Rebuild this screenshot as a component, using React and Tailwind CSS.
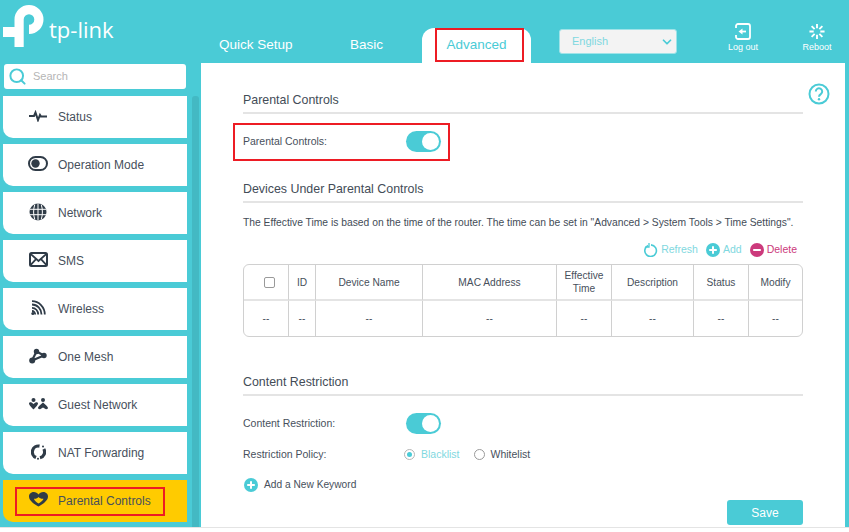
import { ChevronDown, Search } from 'lucide-react'

const ink = '#2f3b47'

function StatusIcon() {
  return (
    <svg width="18" height="12" viewBox="0 0 18 12" fill="none" stroke={ink} strokeWidth="2">
      <path d="M0 6h5l1.500-3.500L9 10l2-5 1 1.500h6" />
    </svg>
  )
}

function ModeIcon() {
  return (
    <svg width="20" height="15" viewBox="0 0 20 15" fill="none">
      <rect x="1" y="1" width="18" height="13" rx="6.500" stroke={ink} strokeWidth="2" />
      <circle cx="7.500" cy="7.500" r="4.200" fill={ink} />
    </svg>
  )
}

function GlobeIcon() {
  return (
    <svg width="18" height="18" viewBox="0 0 18 18">
      <circle cx="9" cy="9" r="8.500" fill={ink} />
      <path d="M1 6.300h16M1 11.700h16M9 .5v17M5.800 1.500c-1.600 4.500-1.600 10.500 0 15M12.200 1.500c1.600 4.500 1.600 10.500 0 15" stroke="#fff" strokeWidth="1" fill="none" />
    </svg>
  )
}

function MailIcon() {
  return (
    <svg width="19" height="15" viewBox="0 0 19 15" fill="none" stroke={ink}>
      <rect x="1" y="1" width="17" height="13" rx="1.500" strokeWidth="2" />
      <path d="M1.500 1.800 9.500 9l8-7.200M1.500 13.200l5.500-6M17.500 13.200l-5.500-6" strokeWidth="1.800" />
    </svg>
  )
}

function WirelessIcon() {
  return (
    <svg width="15" height="15" viewBox="0 0 15 15" fill="none" stroke={ink} strokeWidth="1.800">
      <path d="M1 1.200C8 1.200 13.800 7 13.800 14.500M1 4.500c5.200 0 9.500 4.500 9.500 10M1 7.800c3.500 0 6.200 3 6.200 6.700M1 11c1.800 0 3.200 1.600 3.200 3.500" />
      <circle cx="1.800" cy="13.400" r="1.500" fill={ink} stroke="none" />
    </svg>
  )
}

function MeshIcon() {
  return (
    <svg width="18" height="16" viewBox="0 0 18 16" fill={ink} stroke={ink}>
      <path d="M7.500 3.500 3 12.500M7.500 3.500l7.500 4M3 12.500 15 7.500" strokeWidth="2.200" fill="none" />
      <circle cx="7.500" cy="3.500" r="2.700" stroke="none" />
      <circle cx="3.200" cy="12.500" r="3" stroke="none" />
      <circle cx="15" cy="7.500" r="2.700" stroke="none" />
    </svg>
  )
}

function GuestIcon() {
  return (
    <svg width="19" height="12" viewBox="0 0 19 12" fill={ink}>
      <circle cx="4.500" cy="2" r="2" />
      <path d="M0 5.500c0-1 1.500-1.500 2.500-1 .8.400 1.400.9 2 1.500.6-.6 1.200-1.100 2-1.500 1-.5 2.500 0 2.500 1 0 1.500-3 4.500-4.500 6C3 10 0 7 0 5.500Z" />
      <circle cx="14" cy="2" r="2" />
      <path d="M14 4.500c1.500 1 5 4.500 5 5.500s-1.500 1.500-2.500 1L14 9.500 11.500 11c-1 .5-2.500 0-2.500-1s3.500-4.500 5-5.500Z" />
    </svg>
  )
}

function NatIcon() {
  return (
    <svg width="15" height="16" viewBox="0 0 15 16" fill="none" stroke={ink} strokeWidth="3.200">
      <path d="M8.500 2.100A6 6 0 0 0 5 13.500" />
      <path d="M12.800 5A6 6 0 0 1 9 13.800" />
      <circle cx="12" cy="2.500" r="1" fill={ink} stroke="none" />
      <circle cx="7" cy="14.800" r="1" fill={ink} stroke="none" />
    </svg>
  )
}

function HeartIcon() {
  return (
    <svg width="19" height="15" viewBox="0 0 19 15">
      <path d="M9.500 14.500C6 12.500 0 9 0 4.500 0 1.500 2.500 0 4.700 0 6.800 0 8.500 1 9.500 2.500 10.500 1 12.200 0 14.300 0 16.500 0 19 1.500 19 4.500c0 4.500-6 8-9.500 10Z" fill={ink} />
      <path d="M9.500 11.500C7.500 10.200 5 8.500 5 6.800c2 .2 3.500-.5 4.500-1.800 1 1.300 3 2 5 1.800-.2 1.800-3 3.500-5 4.700Z" fill="#ffcb00" />
    </svg>
  )
}

const menu = [
  { label: 'Status', icon: <StatusIcon /> },
  { label: 'Operation Mode', icon: <ModeIcon /> },
  { label: 'Network', icon: <GlobeIcon /> },
  { label: 'SMS', icon: <MailIcon /> },
  { label: 'Wireless', icon: <WirelessIcon /> },
  { label: 'One Mesh', icon: <MeshIcon /> },
  { label: 'Guest Network', icon: <GuestIcon /> },
  { label: 'NAT Forwarding', icon: <NatIcon /> },
  { label: 'Parental Controls', icon: <HeartIcon />, active: true },
]

const columns = ['', 'ID', 'Device Name', 'MAC Address', 'Effective Time', 'Description', 'Status', 'Modify']

function RedBox({ className }) {
  return <div className={`pointer-events-none absolute border-2 border-[#ed1c24] ${className}`} />
}

function Logo() {
  return (
    <div className="flex h-[63px] w-[219px] shrink-0">
      <svg width="46" height="48" viewBox="0 0 46 48" className="mt-[5px] ml-[3px]" fill="#fff">
        <path d="M11.500 42V14.500A14.500 14.500 0 1 1 26 29V19.800A5.300 5.300 0 1 0 20.700 14.500V42Z" />
        <rect x="0" y="22" width="20" height="10" />
      </svg>
      <span className="mt-[12px] font-['Open_Sans'] text-[22px] leading-[34px] text-white">tp-link</span>
    </div>
  )
}

function Header() {
  return (
    <header className="flex h-[63px] items-end bg-[#4acbd6] text-white">
      <Logo />
      <div className="flex h-[35px] items-center text-[13.500px]">
        <span className="w-[131px]">Quick Setup</span>
        <span className="w-[72px]">Basic</span>
        <div className="flex h-[35px] w-[109px] items-center justify-center rounded-t-[12px] bg-white text-[#4acbd6]">
          Advanced
        </div>
      </div>
      <div className="mb-[9px] ml-[28px] flex h-[25px] w-[118px] items-center justify-between rounded-[3px] border border-[#9fe3e8] bg-[#f3f3f3] pr-[2px] pl-[12px] text-[11px] text-[#7fd8e0]">
        English
        <ChevronDown size={14} strokeWidth={3} className="text-[#4acbd6]" />
      </div>
      <div className="mb-[10px] ml-[40px] flex w-[52px] flex-col items-center text-[9px] leading-[11px]">
        <svg width="16" height="17" viewBox="0 0 16 17" fill="none" stroke="#fff" strokeWidth="1.800" className="mb-[2px]">
          <path d="M1 5V3a2 2 0 0 1 2-2h10a2 2 0 0 1 2 2v11a2 2 0 0 1-2 2H3a2 2 0 0 1-2-2v-2" />
          <path d="M7 8.500h4" />
          <path d="M7.500 5.500v6l-4-3Z" fill="#fff" stroke="none" />
        </svg>
        Log out
      </div>
      <div className="mb-[10px] ml-[22px] flex w-[52px] flex-col items-center text-[9px] leading-[11px]">
        <svg width="18" height="17" viewBox="0 0 18 18" fill="none" stroke="#fff" strokeWidth="2" className="mb-[2px]">
          <path d="M9 1v4.500M9 12.500V17M1 9h4.500M12.500 9H17M3.300 3.300l3.200 3.200M11.500 11.500l3.200 3.200M14.700 3.300l-3.200 3.200M6.500 11.500l-3.200 3.200" />
        </svg>
        Reboot
      </div>
    </header>
  )
}

function Sidebar() {
  return (
    <aside className="flex w-[201px] shrink-0 flex-col pl-[3px]">
      <div className="mt-[1px] mb-[7px] ml-[1px] flex h-[25px] w-[182px] items-center rounded-[3px] bg-white pl-[4px]">
        <Search size={19} strokeWidth={2.5} className="text-[#4acbd6]" />
        <span className="ml-[6px] text-[11px] text-[#b5b5b5]">Search</span>
      </div>
      <div className="flex">
        <nav className="flex w-[184px] flex-col gap-[6px] pb-[5px]">
          {menu.map((item) => (
            <div
              key={item.label}
              className={`flex h-[42px] items-center rounded-bl-[10px] ${item.active ? 'bg-[#ffcb00]' : 'bg-white'}`}
            >
              <span className="flex w-[55px] shrink-0 justify-center pb-[3px] pl-[15px]">{item.icon}</span>
              <span className="text-[12px] text-[#47505c]">{item.label}</span>
            </div>
          ))}
        </nav>
        <div className="ml-[5px] w-[7px] rounded-t-[3px] bg-[#43b9c3]" />
      </div>
    </aside>
  )
}

function SectionTitle({ children }) {
  return (
    <h2 className="h-[23px] border-b-2 border-[#e4e4e4] text-[12.400px] leading-[18px] text-[#434c57]">
      {children}
    </h2>
  )
}

function Toggle() {
  return (
    <div className="flex h-[21px] w-[35px] items-center justify-end rounded-full bg-[#4acbd6] pr-[2px]">
      <div className="h-[17px] w-[17px] rounded-full bg-white" />
    </div>
  )
}

function PlusCircle({ size = 14 }) {
  return (
    <svg width={size} height={size} viewBox="0 0 14 14">
      <circle cx="7" cy="7" r="7" fill="#4acbd6" />
      <path d="M7 3.200v7.600M3.200 7h7.600" stroke="#fff" strokeWidth="2" />
    </svg>
  )
}

function DeviceTable() {
  return (
    <div className="grid grid-cols-[45px_27px_107px_134px_55px_82px_55px_1fr] grid-rows-[36px_35px] rounded-[6px] border border-[#d0d0d0] text-center text-[10.200px] leading-[13px] text-[#47505c]">
      {columns.map((col, i) => (
        <div
          key={col || 'check'}
          className={`flex items-center justify-center border-b-2 border-[#e4e4e4] px-[6px] ${i < 7 ? 'border-r border-r-[#d0d0d0]' : ''}`}
        >
          {i === 0 ? <span className="ml-[6px] h-[11px] w-[11px] rounded-[2px] border border-[#9a9a9a]" /> : col}
        </div>
      ))}
      {columns.map((col, i) => (
        <div
          key={`${col}-value`}
          className={`flex items-center justify-center ${i < 7 ? 'border-r border-[#d0d0d0]' : ''}`}
        >
          --
        </div>
      ))}
    </div>
  )
}

function Main() {
  return (
    <main className="flex flex-1 bg-white pl-[42px]">
      <div className="w-[560px] pt-[28px]">
        <SectionTitle>Parental Controls</SectionTitle>
        <div className="mt-[17px] flex h-[21px] items-center text-[10.500px] text-[#47505c]">
          <span className="w-[163px]">Parental Controls:</span>
          <Toggle />
        </div>
        <div className="mt-[28px]">
          <SectionTitle>Devices Under Parental Controls</SectionTitle>
        </div>
        <p className="mt-[13px] text-[10.300px] leading-[14px] whitespace-nowrap text-[#434c57]">
          The Effective Time is based on the time of the router. The time can be set in "Advanced &gt; System Tools &gt; Time Settings".
        </p>
        <div className="mt-[13px] mb-[7px] flex h-[14px] items-center justify-end pr-[6px] text-[10.500px]">
          <svg width="14" height="14" viewBox="0 0 14 14" fill="none" stroke="#4acbd6" strokeWidth="1.600">
            <path d="M4 2.500a5.800 5.800 0 1 0 3-.6" />
            <path d="M5 0v4H1.500" strokeWidth="1.300" />
          </svg>
          <span className="ml-[3px] text-[#7fd8e0]">Refresh</span>
          <span className="ml-[8px]"><PlusCircle /></span>
          <span className="ml-[3px] text-[#7fd8e0]">Add</span>
          <svg width="14" height="14" viewBox="0 0 14 14" className="ml-[8px]">
            <circle cx="7" cy="7" r="7" fill="#cc3a7c" />
            <path d="M3.200 7h7.600" stroke="#fff" strokeWidth="2" />
          </svg>
          <span className="ml-[3px] text-[#cc3a7c]">Delete</span>
        </div>
        <DeviceTable />
        <div className="mt-[36px]">
          <SectionTitle>Content Restriction</SectionTitle>
        </div>
        <div className="mt-[17px] flex h-[21px] items-center text-[10.500px] text-[#47505c]">
          <span className="w-[163px] pt-[1px]">Content Restriction:</span>
          <Toggle />
        </div>
        <div className="mt-[10px] flex h-[21px] items-center text-[10.500px] text-[#47505c]">
          <span className="w-[161px]">Restriction Policy:</span>
          <span className="flex h-[11px] w-[11px] items-center justify-center rounded-full border border-[#b5b5b5]">
            <span className="h-[5px] w-[5px] rounded-full bg-[#4acbd6]" />
          </span>
          <span className="ml-[6px] text-[#7fd8e0]">Blacklist</span>
          <span className="ml-[14px] h-[11px] w-[11px] rounded-full border border-[#9a9a9a]" />
          <span className="ml-[6px]">Whitelist</span>
        </div>
        <div className="mt-[12px] flex h-[16px] items-center pl-[1px] text-[10.200px] text-[#47505c]">
          <PlusCircle />
          <span className="ml-[6px]">Add a New Keyword</span>
        </div>
        <div className="mt-[7px] flex justify-end">
          <div className="flex h-[25px] w-[76px] items-center justify-center rounded-[3px] bg-[#4acbd6] text-[12px] text-white">
            Save
          </div>
        </div>
      </div>
      <svg width="22" height="22" viewBox="0 0 22 22" fill="none" className="mt-[20px] ml-[5px]" stroke="#4acbd6" strokeWidth="2">
        <circle cx="11" cy="11" r="9.500" />
        <path d="M7.800 8.500a3.200 3.200 0 1 1 5 2.600c-1.200.8-1.800 1.400-1.800 2.600" />
        <circle cx="11" cy="16.300" r="1.200" fill="#4acbd6" stroke="none" />
      </svg>
    </main>
  )
}

export default function App() {
  return (
    <div className="relative h-[532px] w-[849px] overflow-hidden bg-white font-['Liberation_Sans',Arial,sans-serif]">
      <div className="flex h-[528px] flex-col border-b border-[#e4e4e4] bg-[#4acbd6]">
        <Header />
        <div className="flex flex-1 overflow-hidden pr-[4px]">
          <Sidebar />
          <Main />
        </div>
      </div>
      <RedBox className="top-[28px] left-[435px] h-[34px] w-[89px]" />
      <RedBox className="top-[123px] left-[233px] h-[38px] w-[217px]" />
      <RedBox className="top-[487px] left-[15px] h-[29px] w-[150px]" />
    </div>
  )
}
